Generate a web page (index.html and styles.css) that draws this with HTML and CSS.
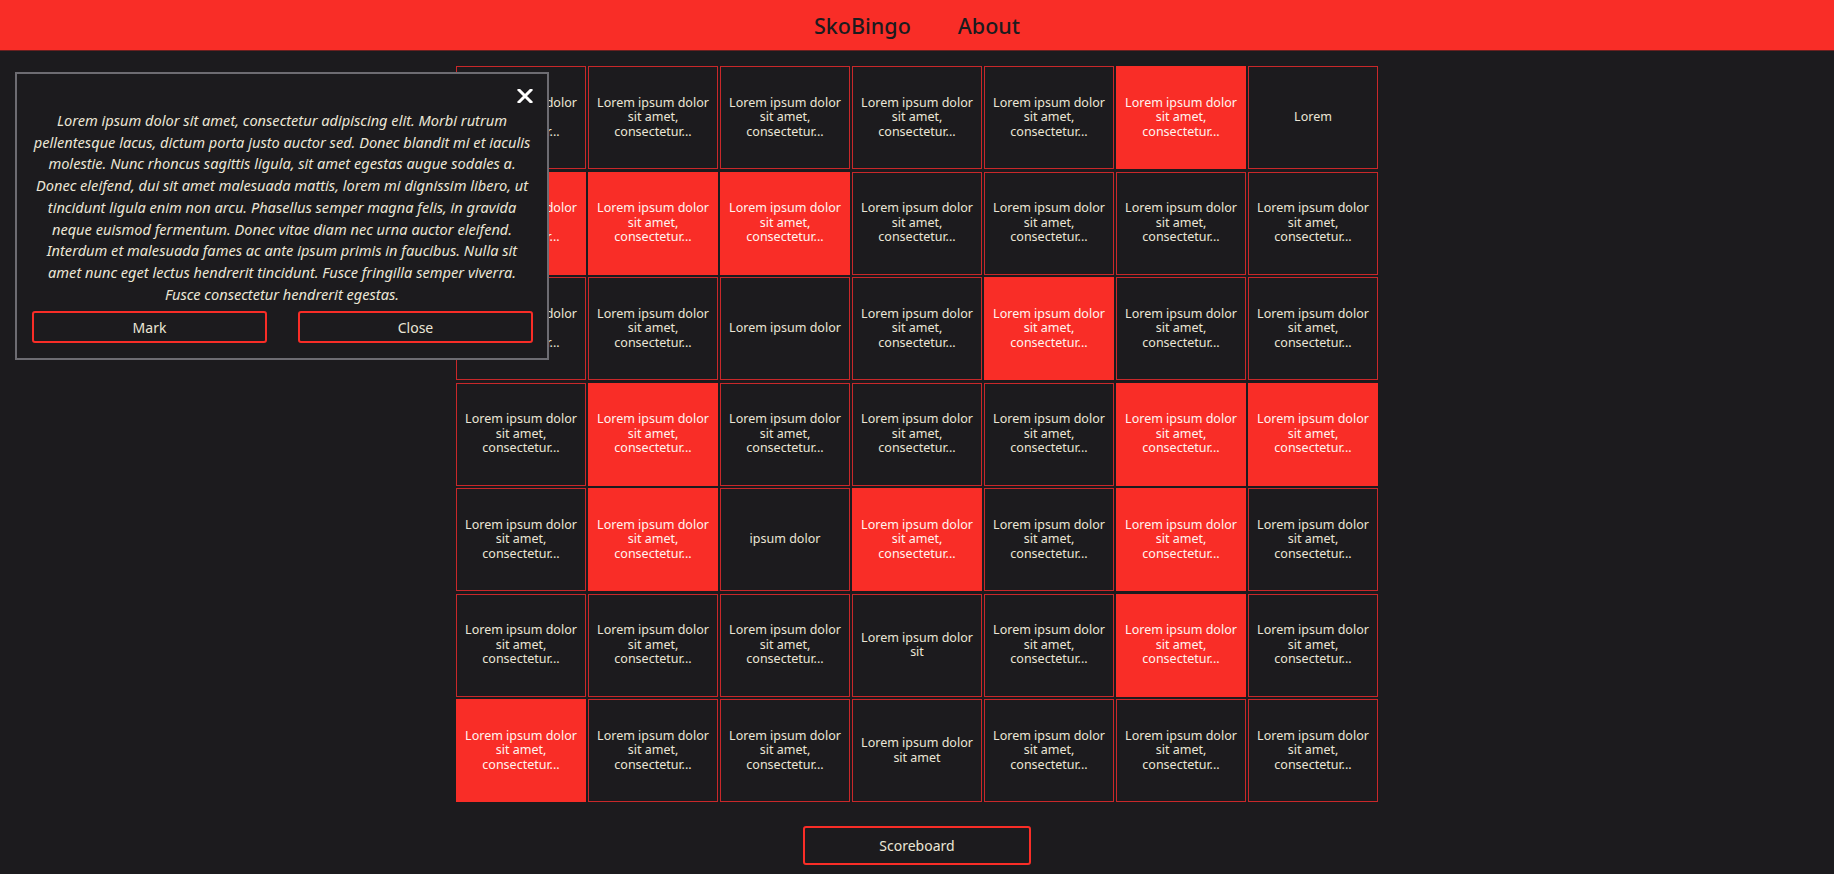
FILE: index.html
```html
<!DOCTYPE html>
<html lang="en">
<head>
  <meta charset="UTF-8">
  <meta name="viewport" content="width=device-width, initial-scale=1.0">
  <title>SkoBingo</title>
  <link rel="stylesheet" href="styles.css">
</head>
<body>

  <div class="header">
    <a class="nav-link" href="#">SkoBingo</a>
    <a class="nav-link" href="#">About</a>
  </div>

  <div class="board">
    <div class="cell">Lorem ipsum dolor sit amet, consectetur...</div>
    <div class="cell">Lorem ipsum dolor sit amet, consectetur...</div>
    <div class="cell">Lorem ipsum dolor sit amet, consectetur...</div>
    <div class="cell">Lorem ipsum dolor sit amet, consectetur...</div>
    <div class="cell">Lorem ipsum dolor sit amet, consectetur...</div>
    <div class="cell marked">Lorem ipsum dolor sit amet, consectetur...</div>
    <div class="cell">Lorem</div>

    <div class="cell marked">Lorem ipsum dolor sit amet, consectetur...</div>
    <div class="cell marked">Lorem ipsum dolor sit amet, consectetur...</div>
    <div class="cell marked">Lorem ipsum dolor sit amet, consectetur...</div>
    <div class="cell">Lorem ipsum dolor sit amet, consectetur...</div>
    <div class="cell">Lorem ipsum dolor sit amet, consectetur...</div>
    <div class="cell">Lorem ipsum dolor sit amet, consectetur...</div>
    <div class="cell">Lorem ipsum dolor sit amet, consectetur...</div>

    <div class="cell">Lorem ipsum dolor sit amet, consectetur...</div>
    <div class="cell">Lorem ipsum dolor sit amet, consectetur...</div>
    <div class="cell">Lorem ipsum dolor</div>
    <div class="cell">Lorem ipsum dolor sit amet, consectetur...</div>
    <div class="cell marked">Lorem ipsum dolor sit amet, consectetur...</div>
    <div class="cell">Lorem ipsum dolor sit amet, consectetur...</div>
    <div class="cell">Lorem ipsum dolor sit amet, consectetur...</div>

    <div class="cell">Lorem ipsum dolor sit amet, consectetur...</div>
    <div class="cell marked">Lorem ipsum dolor sit amet, consectetur...</div>
    <div class="cell">Lorem ipsum dolor sit amet, consectetur...</div>
    <div class="cell">Lorem ipsum dolor sit amet, consectetur...</div>
    <div class="cell">Lorem ipsum dolor sit amet, consectetur...</div>
    <div class="cell marked">Lorem ipsum dolor sit amet, consectetur...</div>
    <div class="cell marked">Lorem ipsum dolor sit amet, consectetur...</div>

    <div class="cell">Lorem ipsum dolor sit amet, consectetur...</div>
    <div class="cell marked">Lorem ipsum dolor sit amet, consectetur...</div>
    <div class="cell">ipsum dolor</div>
    <div class="cell marked">Lorem ipsum dolor sit amet, consectetur...</div>
    <div class="cell">Lorem ipsum dolor sit amet, consectetur...</div>
    <div class="cell marked">Lorem ipsum dolor sit amet, consectetur...</div>
    <div class="cell">Lorem ipsum dolor sit amet, consectetur...</div>

    <div class="cell">Lorem ipsum dolor sit amet, consectetur...</div>
    <div class="cell">Lorem ipsum dolor sit amet, consectetur...</div>
    <div class="cell">Lorem ipsum dolor sit amet, consectetur...</div>
    <div class="cell">Lorem ipsum dolor sit</div>
    <div class="cell">Lorem ipsum dolor sit amet, consectetur...</div>
    <div class="cell marked">Lorem ipsum dolor sit amet, consectetur...</div>
    <div class="cell">Lorem ipsum dolor sit amet, consectetur...</div>

    <div class="cell marked">Lorem ipsum dolor sit amet, consectetur...</div>
    <div class="cell">Lorem ipsum dolor sit amet, consectetur...</div>
    <div class="cell">Lorem ipsum dolor sit amet, consectetur...</div>
    <div class="cell">Lorem ipsum dolor sit amet</div>
    <div class="cell">Lorem ipsum dolor sit amet, consectetur...</div>
    <div class="cell">Lorem ipsum dolor sit amet, consectetur...</div>
    <div class="cell">Lorem ipsum dolor sit amet, consectetur...</div>
  </div>

  <div class="actions">
    <button class="btn btn-wide">Scoreboard</button>
  </div>

  <div class="popup">
    <div class="popup-top">
      <svg class="close-icon" width="16" height="14" viewBox="0 0 16 14">
        <path d="M2 1 L14 13 M14 1 L2 13" stroke="#ffffff" stroke-width="3" stroke-linecap="square" fill="none"/>
      </svg>
    </div>
    <p class="popup-text">Lorem ipsum dolor sit amet, consectetur adipiscing elit. Morbi rutrum pellentesque lacus, dictum porta justo auctor sed. Donec blandit mi et iaculis molestie. Nunc rhoncus sagittis ligula, sit amet egestas augue sodales a. Donec eleifend, dui sit amet malesuada mattis, lorem mi dignissim libero, ut tincidunt ligula enim non arcu. Phasellus semper magna felis, in gravida neque euismod fermentum. Donec vitae diam nec urna auctor eleifend. Interdum et malesuada fames ac ante ipsum primis in faucibus. Nulla sit amet nunc eget lectus hendrerit tincidunt. Fusce fringilla semper viverra. Fusce consectetur hendrerit egestas.</p>
    <div class="popup-buttons">
      <button class="btn">Mark</button>
      <button class="btn">Close</button>
    </div>
  </div>

</body>
</html>
```

FILE: styles.css
```css
body {
    margin: 0;
    background-color: #1c1b1e;
    color: #ebe6d6;
    font-family: 'Noto Sans', 'Open Sans', sans-serif;
}

.header {
    display: flex;
    justify-content: center;
    gap: 47px;
    height: 50px;
    align-items: center;
    background-color: #f92d27;
    border-bottom: 1px solid #6a2020;
}

.nav-link {
    color: #1c1b1e;
    text-decoration: none;
    font-size: 21.5px;
    font-weight: 500;
}

.board {
    display: grid;
    grid-template-columns: repeat(7, 130px);
    grid-auto-rows: 103px;
    gap: 2.5px 2px;
    justify-content: center;
    margin-top: 15px;
}

.cell {
    display: flex;
    align-items: center;
    justify-content: center;
    text-align: center;
    box-sizing: border-box;
    padding: 0 6px;
    border: 1px solid #c9282a;
    font-size: 12.5px;
    line-height: 14.4px;
}

.cell.marked {
    background-color: #f92d27;
    border-color: #f92d27;
    color: #fff4f0;
}

.actions {
    display: flex;
    justify-content: center;
    margin-top: 24px;
}

.btn {
    background: transparent;
    color: #ebe6d6;
    border: 2px solid #f92d27;
    border-radius: 3px;
    font-family: 'Noto Sans', 'Open Sans', sans-serif;
    font-size: 14px;
    height: 32px;
    cursor: pointer;
}

.btn-wide {
    width: 228px;
    height: 39px;
}

/* popup over the board */
.popup {
    position: absolute;
    left: 15px;
    top: 72px;
    width: 534px;
    height: 288px;
    box-sizing: border-box;
    border: 2px solid #6d6c72;
    background-color: #1c1b1e;
    padding: 15px 8px;
    display: flex;
    flex-direction: column;
}

.popup-top {
    display: flex;
    justify-content: flex-end;
    height: 21px;
    padding-right: 6px;
}

.popup-text {
    margin: 0;
    padding: 0 5px;
    font-style: italic;
    font-size: 14.6px;
    line-height: 21.7px;
    text-align: center;
}

.popup-buttons {
    display: flex;
    gap: 31px;
    margin-top: auto;
    padding: 0 6px 0 7px;
}

.popup-buttons .btn {
    flex: 1;
}
```
